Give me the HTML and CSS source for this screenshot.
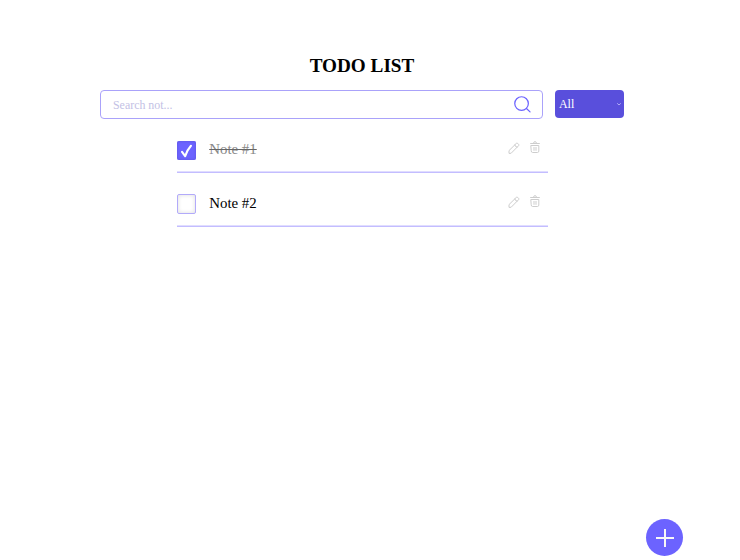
FILE: index.html
```html
<!DOCTYPE html>
<html lang="en">
<head>
<meta charset="utf-8">
<title>Todo List</title>
<link rel="stylesheet" href="styles.css">
</head>
<body>
<svg class="sprite" aria-hidden="true">
  <symbol id="pencil" viewBox="0 0 12 12"><path d="M1 11V8.600L8.300 1.400q.7-.7 1.400 0l.9.9q.7.7 0 1.400L3.400 11zM6.800 2.900q.2 2.100 2.300 2.300"/></symbol>
  <symbol id="trash" viewBox="0 0 10 12"><path d="M.6 2.500h8.800M3.500 2.300q0-1.700 1.500-1.700t1.500 1.700M1.200 4.500h7.600v5.600q0 1.400-1.400 1.400H2.600q-1.400 0-1.400-1.400zM4 6.400v3M6 6.400v3"/></symbol>
</svg>
<main class="app">
  <h1 class="title">TODO LIST</h1>
  <div class="toolbar">
    <label class="search">
      <input class="search-input" type="text" placeholder="Search not...">
      <svg class="search-icon" viewBox="0 0 18 18"><circle cx="8" cy="8" r="7.200"/><path d="M13.200 13.200l3.800 3.600"/></svg>
    </label>
    <button class="filter" type="button"><span>All</span><svg class="chevron" viewBox="0 0 4 3"><path d="M.5.6L2 2 3.500.6"/></svg></button>
  </div>
  <ul class="notes">
    <li class="note done">
      <span class="check"><svg class="tick" viewBox="0 0 20 20"><path d="M5.200 11l3.200 4.400Q10.400 9 14.400 4.600"/></svg></span>
      <span class="text">Note #1</span>
      <svg class="pencil"><use href="#pencil"/></svg>
      <svg class="trash"><use href="#trash"/></svg>
    </li>
    <li class="note">
      <span class="check"></span>
      <span class="text">Note #2</span>
      <svg class="pencil"><use href="#pencil"/></svg>
      <svg class="trash"><use href="#trash"/></svg>
    </li>
  </ul>
  <button class="add" type="button" aria-label="Add note"><svg class="plus" viewBox="0 0 18 18"><path d="M9 0v18M0 9h18"/></svg></button>
</main>
</body>
</html>
```
FILE: styles.css
```css
* { box-sizing: border-box; }
body {
  margin: 0;
  background: #fff;
  color: #000;
  font-family: "Liberation Serif", serif;
}
.sprite { display: none; }
svg { fill: none; flex: none; stroke-linecap: round; stroke-linejoin: round; }
.app {
  display: flex;
  flex-direction: column;
  width: 524px;
  height: 556px;
  margin-left: 100px;
  padding-top: 54px;
}
.title {
  margin: 0 0 12px;
  font-size: 19.2px;
  line-height: 24px;
  text-align: center;
}
.toolbar { display: flex; gap: 12px; height: 29px; }
.search {
  display: flex;
  align-items: center;
  width: 442.500px;
  padding: 0 11.500px 0 12px;
  border: 1px solid #aaa2fa;
  border-radius: 4px;
}
.search-input {
  flex: 1;
  min-width: 0;
  padding: 0;
  border: 0;
  outline: 0;
  background: none;
  font: 11.900px/16px "Liberation Serif", serif;
}
.search-input::placeholder { color: #c3c1e5; opacity: 1; }
.search-icon { width: 17px; height: 17px; margin-right: -1px; stroke: #6c63ff; stroke-width: 1.300; }
.filter {
  display: flex;
  align-items: center;
  justify-content: space-between;
  flex: 1;
  height: 28.400px;
  padding: 0 3px 0 4.400px;
  border: 0;
  border-radius: 4px;
  background: #594fdc;
  color: #fff;
  font: 12px/16px "Liberation Serif", serif;
}
.chevron { width: 4px; height: 3px; stroke: #c9c5ff; stroke-width: .8; }
.notes {
  width: 371px;
  margin: 0 0 0 77px;
  padding: 0;
  list-style: none;
}
.note {
  display: flex;
  height: 54px;
  padding-top: 21px;
  box-shadow: inset 0 -1px #c3bdff, inset 0 -2px #e0ddff;
}
.check {
  width: 19.400px;
  height: 20px;
  border: 1px solid #b2aafa;
  border-radius: 2px;
  box-shadow: inset 0 0 4px #ddd;
}
.done .check { height: 19.500px; margin-top: .5px; border: 0; background: #6c63ff; box-shadow: inset 0 0 3px #5b52dc; }
.tick { display: block; width: 19.400px; height: 20px; stroke: #fff; stroke-width: 2.200; }
.text {
  margin: -1px auto 0 12.800px;
  font-size: 14.900px;
  line-height: 20px;
}
.done .text { color: #888; text-decoration: line-through #666; }
.pencil { width: 12px; height: 12px; margin: 1.500px 10px 0 0; stroke: #cdcdcd; }
.trash { width: 10px; height: 12px; margin: 1px 8px 0 0; stroke: #cdcdcd; }
.add {
  display: grid;
  place-items: center;
  align-self: flex-end;
  width: 37.500px;
  height: 37.500px;
  margin: auto -59px 0 0;
  padding: 0;
  border: 0;
  border-radius: 50%;
  background: #6c63ff;
}
.plus { width: 18px; height: 18px; overflow: visible; margin: 1px 0 0 1px; stroke: #f7f7f7; stroke-width: 2; stroke-linecap: butt; }
```
